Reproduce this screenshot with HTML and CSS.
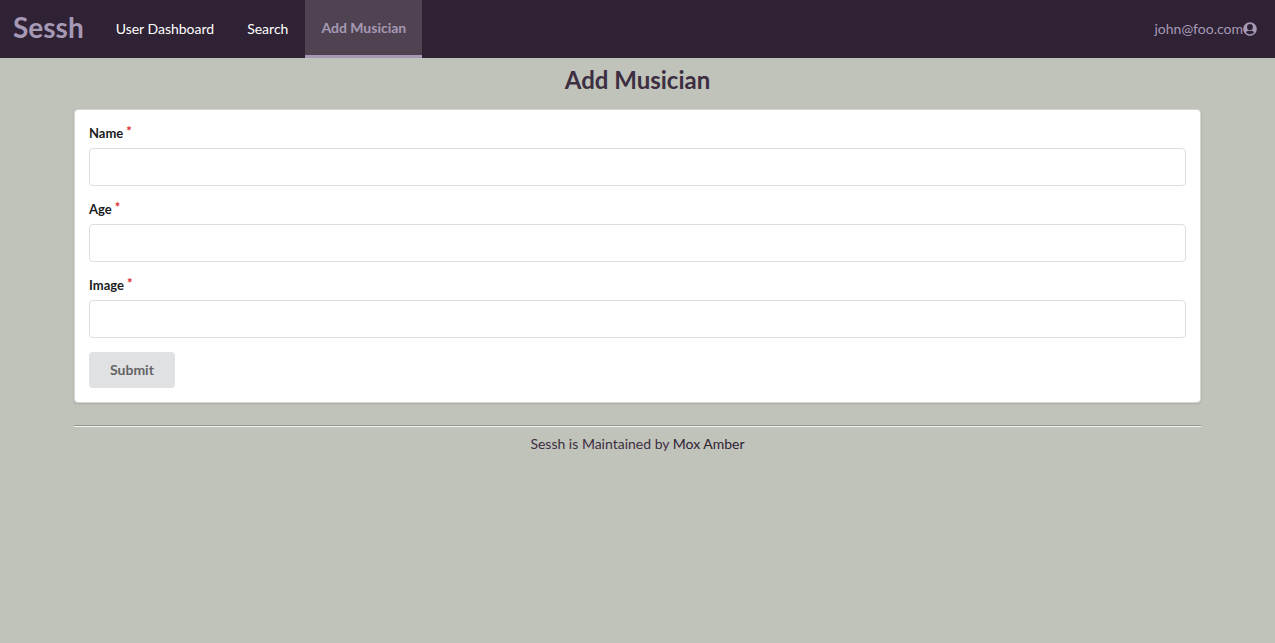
FILE: index.html
```html
<!DOCTYPE html>
<html lang="en">
<head>
<meta charset="utf-8">
<title>Sessh</title>
<link rel="stylesheet" href="styles.css">
</head>
<body>
<nav class="navbar">
  <a class="brand" href="#"><h1>Sessh</h1></a>
  <a class="item" href="#">User Dashboard</a>
  <a class="item" href="#">Search</a>
  <a class="item active" href="#" aria-current="page">Add Musician</a>
  <a class="user" href="#">john@foo.com<svg class="user-icon" viewBox="0 0 496 512" aria-hidden="true"><path fill="currentColor" d="M248 8C111 8 0 119 0 256s111 248 248 248 248-111 248-248S385 8 248 8zm0 68c62 0 108 46 108 112s-46 112-108 112-108-46-108-112S186 76 248 76zm0 372c-58.700 0-111.300-26.600-146.500-68.200 18.800-35.400 55.600-59.800 98.500-59.800 2.400 0 4.800.4 7.100 1.100 13 4.200 26.600 6.900 40.900 6.900 14.300 0 28-2.700 40.900-6.900 2.300-.7 4.700-1.100 7.100-1.100 42.900 0 79.700 24.400 98.500 59.800C359.300 421.400 306.700 448 248 448z"/></svg></a>
</nav>
<main class="container">
  <h2 class="title">Add Musician</h2>
  <form class="segment">
    <div class="field"><label for="name">Name<span class="star">*</span></label><input id="name" type="text"></div>
    <div class="field"><label for="age">Age<span class="star">*</span></label><input id="age" type="text"></div>
    <div class="field"><label for="image">Image<span class="star">*</span></label><input id="image" type="text"></div>
    <button class="submit" type="submit">Submit</button>
  </form>
</main>
<footer class="container footer">
  <hr class="rule">
  Sessh is Maintained by <a class="author" href="#">Mox Amber</a>
</footer>
</body>
</html>
```
FILE: styles.css
```css
* { box-sizing: border-box; }
body {
  margin: 0;
  background: #c0c3ba;
  color: #3d2e42;
  font: 14px/20px Lato, "Liberation Sans", sans-serif;
}
a { color: inherit; text-decoration: none; }
.navbar {
  display: flex;
  gap: 1px;
  height: 58px;
  background: #2f2235;
  color: #fff;
}
.brand, .item, .user { display: flex; align-items: center; }
.brand { padding: 0 15px 4px 13px; color: #a599b5; }
.brand h1 { margin: 0; font-size: 28px; line-height: 36px; }
.item { padding: 0 16px; }
.active {
  background: #504351;
  border-bottom: 3px solid #a599b5;
  color: #a599b5;
  font-weight: 700;
}
.user { margin-left: auto; padding-right: 18px; color: #a599b5; }
.user-icon { width: 14px; height: 14px; }
.container { margin: 0 74px; }
.title {
  margin: 0;
  padding: 7px 0 14px;
  font-size: 24px;
  line-height: 30px;
  text-align: center;
}
.segment {
  padding: 14px;
  background: #fff;
  border: 1px solid #d4d4d5;
  border-radius: 4px;
  box-shadow: 0 1px 2px rgba(34, 36, 38, .15);
}
.field { margin-bottom: 14px; }
.field label {
  display: block;
  margin-bottom: 6px;
  color: #1b1c1d;
  font-size: 13px;
  font-weight: 700;
  line-height: 18px;
}
.star {
  display: inline-block;
  margin-left: 3px;
  color: #db2828;
  line-height: 12px;
  vertical-align: 2px;
}
.field input {
  display: block;
  width: 100%;
  height: 38px;
  padding: 8px 14px;
  border: 1px solid #dededf;
  border-radius: 4px;
  background: #fff;
  font: inherit;
}
.submit {
  display: block;
  height: 36px;
  padding: 0 21px;
  border: 0;
  border-radius: 4px;
  background: #e0e1e2;
  color: #636465;
  font: inherit;
  font-weight: 700;
}
.footer {
  margin-top: 22px;
  text-align: center;
}
.rule {
  height: 2px;
  margin: 0 0 7px;
  border: 0;
  border-top: 1px solid #949693;
  border-bottom: 1px solid #f2f3f1;
}
.author { color: #2f2235; }
```
